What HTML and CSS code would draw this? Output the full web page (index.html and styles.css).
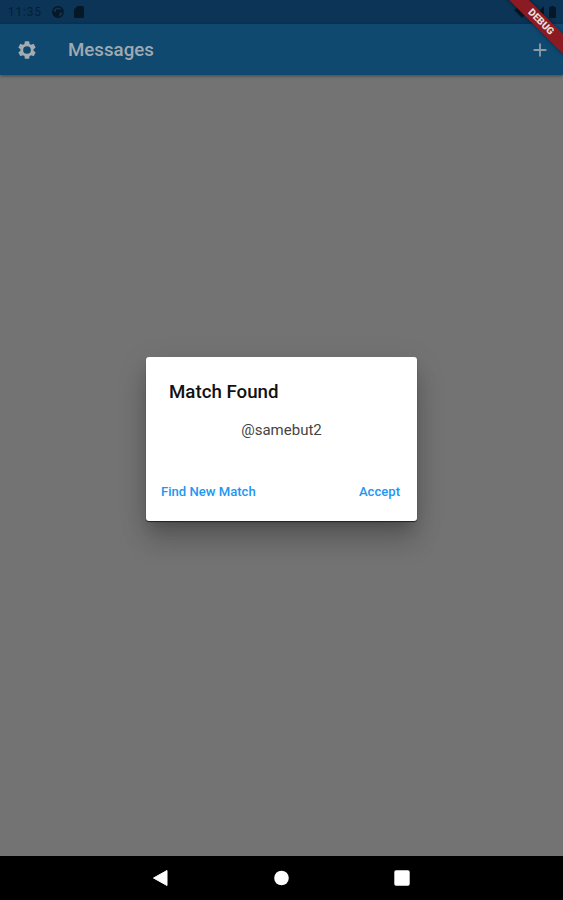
FILE: index.html
```html
<!DOCTYPE html>
<html lang="en">
<head>
    <meta charset="UTF-8">
    <meta name="viewport" content="width=device-width, initial-scale=1.0">
    <title>Messages</title>

    <link rel="stylesheet" href="styles.css">
</head>
<body>

    <div class="screen">
        <div class="status">
            <span class="time">11:35</span>
            <svg class="app" width="12" height="12" viewBox="0 0 12 12">
                <circle cx="6" cy="6" r="5.2" fill="none" stroke="#061726" stroke-width="1.4"/>
                <path d="M4 3.5h6v3H7.5V9L5 11 1 9 1 5l3 1z" fill="#061726"/>
            </svg>
            <svg class="sd" width="10" height="12" viewBox="0 0 10 12">
                <path d="M3.5 0H8.5Q10 0 10 1.5V10.5Q10 12 8.5 12H1.5Q0 12 0 10.5V3.5z" fill="#061726"/>
            </svg>
            <svg class="signal" width="43" height="14" viewBox="0 0 43 14">
                <path d="M0 5Q7-1 15 5L8 13z" fill="#061726"/>
                <path d="M30 1V13H18z" fill="#061726"/>
                <path d="M35 2h2V1h3v1h2v11h-7z" fill="#061726"/>
            </svg>
        </div>

        <div class="bar">
            <svg width="22" height="22" viewBox="0 0 24 24">
                <path fill="#a5acb1" fill-rule="evenodd" d="M19.14 12.94c.04-.3.06-.61.06-.94s-.02-.64-.07-.94l2.03-1.58a.49.49 0 0 0 .12-.61l-1.92-3.32a.49.49 0 0 0-.59-.22l-2.39.96a7 7 0 0 0-1.62-.94l-.36-2.54a.48.48 0 0 0-.48-.41h-3.84a.48.48 0 0 0-.47.41l-.36 2.54c-.59.24-1.13.57-1.62.94l-2.39-.96a.48.48 0 0 0-.59.22L2.74 8.87a.47.47 0 0 0 .12.61l2.03 1.58a6 6 0 0 0 0 1.88l-2.03 1.58a.49.49 0 0 0-.12.61l1.92 3.32c.12.22.37.29.59.22l2.39-.96c.5.38 1.03.7 1.62.94l.36 2.54c.05.24.24.41.48.41h3.84c.24 0 .44-.17.47-.41l.36-2.54a7 7 0 0 0 1.62-.94l2.39.96c.22.08.47 0 .59-.22l1.92-3.32a.47.47 0 0 0-.12-.61zM12 16.2a4.2 4.2 0 1 1 0-8.4 4.2 4.2 0 0 1 0 8.4z"/>
            </svg>
            <h1>Messages</h1>
            <svg width="22" height="22" viewBox="0 0 24 24">
                <path d="M19 13h-6v6h-2v-6H5v-2h6V5h2v6h6z" fill="#8e9ba5"/>
            </svg>
        </div>

        <div class="content">
            <div class="dialog">
                <h2>Match Found</h2>
                <p>@samebut2</p>
                <div class="actions">
                    <button>Find New Match</button>
                    <button>Accept</button>
                </div>
            </div>
        </div>

        <div class="nav">
            <svg width="16" height="18" viewBox="0 0 16 18">
                <path d="M1.5 9L15 1.5V16.5z" fill="#fff" stroke="#fff" stroke-linejoin="round"/>
            </svg>
            <svg width="16" height="16" viewBox="0 0 16 16">
                <circle cx="8.5" cy="8" r="7.3" fill="#fff"/>
            </svg>
            <svg width="16" height="16" viewBox="0 0 16 16">
                <rect x="0.3" y="0.3" width="15.4" height="15.4" rx="1.8" fill="#fff"/>
            </svg>
        </div>

        <div class="debug"><span>DEBUG</span></div>
    </div>

</body>
</html>
```
FILE: styles.css
```css
body{
    margin: 0;
    font-family: Roboto, "Liberation Sans", sans-serif;
}

.screen{
    position: relative;
    width: 563px;
    height: 900px;
    overflow: hidden;
    display: flex;
    flex-direction: column;
    background-color: #737373;
}

svg{
    display: block;
    flex: none;
}

.status{
    height: 24px;
    box-sizing: border-box;
    padding-left: 8px;
    padding-right: 6px;
    display: flex;
    align-items: center;
    background-color: #0b3456;
}

.time{
    width: 44px;
    font-size: 12px;
    letter-spacing: 0.8px;
    color: #071f35;
}

.sd{
    margin-left: 10px;
}

.signal{
    margin-left: auto;
}

.bar{
    height: 51px;
    box-sizing: border-box;
    padding-left: 16px;
    padding-right: 12px;
    display: flex;
    align-items: center;
    background-color: #104970;
    box-shadow: 0 1px 3px rgba(0, 0, 0, 0.4);
}

.bar h1{
    flex: 1;
    margin: 0 0 0 30px;
    font-size: 18.7px;
    font-weight: 500;
    color: #a0a9b0;
}

.content{
    flex: 1;
    display: flex;
    justify-content: center;
    align-items: flex-start;
    padding-top: 282px;
}

.dialog{
    width: 271px;
    height: 164px;
    box-sizing: border-box;
    padding: 23px 8px 13px 15px;
    display: flex;
    flex-direction: column;
    border-radius: 3px;
    background-color: white;
    box-shadow: 0 1px 1px #222, 0 10px 14px -6px rgba(0, 0, 0, 0.2), 0 22px 26px 0 rgba(0, 0, 0, 0.14), 0 8px 30px 2px rgba(0, 0, 0, 0.1);
}

.dialog h2{
    margin: 0 0 0 8px;
    font-size: 18.7px;
    font-weight: 500;
    line-height: 24px;
    color: #111;
}

.dialog p{
    margin: 16px 7px 0 0;
    font-size: 15px;
    line-height: 20px;
    text-align: center;
    color: #444;
}

.actions{
    margin-top: auto;
    margin-right: 9px;
    display: flex;
    justify-content: space-between;
}

button{
    padding: 0;
    border: none;
    background: none;
    font-family: inherit;
    font-size: 13.1px;
    font-weight: 500;
    line-height: 32px;
    color: #2196f3;
}

.nav{
    height: 44px;
    box-sizing: border-box;
    padding-left: 152px;
    padding-right: 153px;
    display: flex;
    justify-content: space-between;
    align-items: center;
    background-color: black;
}

/* corner ribbon, lies over both bars */
.debug{
    position: absolute;
    top: 15px;
    right: -28px;
    width: 100px;
    height: 14px;
    transform: rotate(45deg);
    background-color: #8c1a22;
    box-shadow: 0 0 4px rgba(0, 0, 0, 0.5);
    font-size: 10px;
    font-weight: 900;
    line-height: 14px;
    text-align: center;
    color: #e8dcdc;
}
```
